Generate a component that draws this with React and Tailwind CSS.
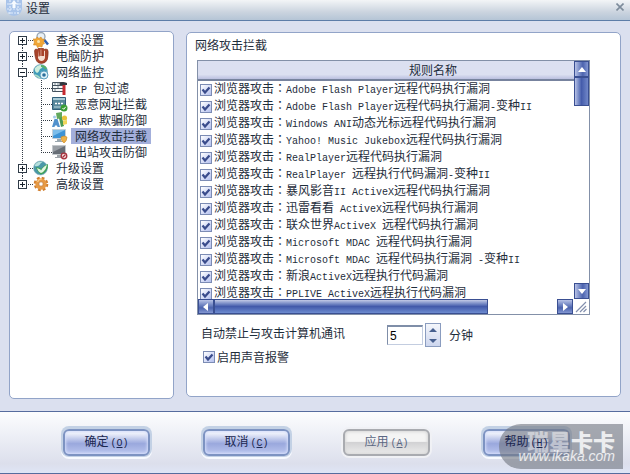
import React, { useState } from "react";

const rules = [
  "浏览器攻击：Adobe Flash Player远程代码执行漏洞",
  "浏览器攻击：Adobe Flash Player远程代码执行漏洞-变种II",
  "浏览器攻击：Windows ANI动态光标远程代码执行漏洞",
  "浏览器攻击：Yahoo! Music Jukebox远程代码执行漏洞",
  "浏览器攻击：RealPlayer远程代码执行漏洞",
  "浏览器攻击：RealPlayer 远程执行代码漏洞-变种II",
  "浏览器攻击：暴风影音II ActiveX远程代码执行漏洞",
  "浏览器攻击：迅雷看看 ActiveX远程代码执行漏洞",
  "浏览器攻击：联众世界ActiveX 远程代码执行漏洞",
  "浏览器攻击：Microsoft MDAC 远程代码执行漏洞",
  "浏览器攻击：Microsoft MDAC 远程代码执行漏洞 -变种II",
  "浏览器攻击：新浪ActiveX远程执行代码漏洞",
  "浏览器攻击：PPLIVE ActiveX远程执行代码漏洞",
];

const tree = [
  { label: "查杀设置", icon: "scan", level: 0 },
  { label: "电脑防护", icon: "glove", level: 0 },
  { label: "网络监控", icon: "globe", level: 0, open: true },
  { label: "IP 包过滤", icon: "filter", level: 1 },
  { label: "恶意网址拦截", icon: "url", level: 1 },
  { label: "ARP 欺骗防御", icon: "arp", level: 1 },
  { label: "网络攻击拦截", icon: "attack", level: 1 },
  { label: "出站攻击防御", icon: "outbound", level: 1, last: true },
  { label: "升级设置", icon: "update", level: 0 },
  { label: "高级设置", icon: "gear", level: 0, last: true },
];

// Latin runs are set at half the width of a Chinese character
const Mixed = ({ text }) =>
  text.split(/([\x20-\x7e]+|：)/).map((part, i) => {
    if (part === "：") {
      return (
        <span key={i} className="font-['Noto_Sans_CJK_TC',sans-serif]">
          {part}
        </span>
      );
    }
    return /^[\x20-\x7e]+$/.test(part) ? (
      <span
        key={i}
        className="font-['Liberation_Mono',monospace] text-[10px] whitespace-pre"
      >
        {part}
      </span>
    ) : (
      part
    );
  });

const icons = {
  scan: (
    <>
      <path d="M11 7.500l4 5" stroke="#2f5fae" strokeWidth="2.500" />
      <circle cx="8" cy="4.500" r="4" fill="#e8f0f6" stroke="#98a5b2" strokeWidth="1.300" />
      <path d="M0 7l3 0 1-2 2 1.500 2-1.500 1 2 2.500.5-1 2 1 2-2 1-.5 2.500-2.500-.5-2 1-1-2.500-3 0 1-3z" fill="#f0a637" stroke="#d4871f" strokeWidth=".6" />
      <circle cx="5.500" cy="9.500" r="1.500" fill="#fbe3a8" />
    </>
  ),
  glove: (
    <>
      <path d="M1.500 3q0-2 2-2l1 1q0-2 2-2l1.500.5Q9-.5 10.500.5L11 1.500q2-1 3.500 0 1 1 .5 6 0 5-3 7-4 2-7 0-3-2-3.500-11.500z" fill="#a8432a" stroke="#7d2d1a" strokeWidth=".6" />
      <path d="M5 2v8q1 3 3.500 3Q11 13 12 10V3L10 2v6H9V1.500H7.500V8h-1z" fill="#f6ded0" />
      <path d="M6 1.500v7M8.200 1v7M10.500 1.500V8" stroke="#a8432a" strokeWidth="1.100" />
    </>
  ),
  globe: (
    <>
      <circle cx="7.500" cy="7.500" r="7" fill="#3f9cba" stroke="#7fa6b6" strokeWidth=".6" />
      <path d="M2 4q4-5 8-2-1 3-3 3-1 3-3 4-3-2-2-5z" fill="#cfeedd" />
      <path d="M2 11q3 1 5 3" stroke="#a9dcc6" strokeWidth="1.500" fill="none" />
      <path d="M8 2q4 0 5 3" stroke="#58b26a" strokeWidth="2" fill="none" />
      <circle cx="11" cy="11" r="4" fill="#dcf0f7" stroke="#5c9fc0" />
      <circle cx="11" cy="11" r="1.800" fill="#2c6f9d" />
    </>
  ),
  filter: (
    <>
      <path d="M.5 2.500h11v9H.5z" fill="#f4f7f8" stroke="#44525e" />
      <path d="M1 5.500h10M1 8.500h10" stroke="#44525e" />
      <path d="M3 3v2M6 3v2M3 9v2M6 6v2" stroke="#7c8a94" />
      <path d="M7.500 3q3-2 7.500 0v2H7.500z" fill="#33383f" />
      <path d="M10.500 5h3v10h-3z" fill="#c62a31" />
    </>
  ),
  url: (
    <>
      <path d="M.5 1.500h13v12H.5z" fill="#58889b" stroke="#315f7a" />
      <path d="M1 2h12v2H1z" fill="#a9cbd7" />
      <path d="M3 7.500h2M6 7.500h2M9 7.500h2" stroke="#fff" strokeWidth="1.500" />
      <path d="M2 11h8" stroke="#bfdae2" />
      <circle cx="12" cy="12" r="3.500" fill="#3a9e35" />
      <path d="M10.500 12l1.200 1.300 2-2.500" stroke="#fff" fill="none" />
    </>
  ),
  arp: (
    <>
      <path d="M4 1l6-1v6l-5 1z" fill="#63a85c" />
      <path d="M7 6l3-1 2 9-3 1z" fill="#4b9a55" />
      <circle cx="12.500" cy="6" r="2.600" fill="#e8c33d" />
      <path d="M11 9l4-1v4l-4 1z" fill="#f0d65c" />
      <path d="M0 15l2.500-8h3L8 15H5.500L5 13.500H3L2.500 15z" fill="#5292cd" />
      <circle cx="2.500" cy="5" r="1.500" fill="#a5cce9" />
    </>
  ),
  attack: (
    <>
      <path d="M.5 1.500h13v9H.5z" fill="#3d93d6" stroke="#c5d0d8" />
      <path d="M1 2h12L1 8z" fill="#7cbdea" />
      <path d="M5 11h4v2h2v1H3v-1h2z" fill="#9ba8b0" />
      <path d="M9 9l3-1 3 1q0 4-3 6-3-2-3-6z" fill="#efb34a" stroke="#c98a28" strokeWidth=".6" />
    </>
  ),
  outbound: (
    <>
      <path d="M.5 1.500h13v9H.5z" fill="#666d75" stroke="#c2c7cb" />
      <path d="M1 2h12L1 8z" fill="#989ea4" />
      <path d="M5 11h4v2h2v1H3v-1h2z" fill="#9da3a8" />
      <circle cx="12" cy="12" r="2.800" fill="#f3dcdc" stroke="#a8323e" strokeWidth="1.300" />
      <path d="M10.500 13.500l3-3" stroke="#a8323e" strokeWidth="1.200" />
    </>
  ),
  update: (
    <>
      <circle cx="7.500" cy="8" r="7" fill="#4b98a8" stroke="#93b9c0" strokeWidth=".6" />
      <path d="M1.500 6q2-5 8-4-2 1-3 3-2 2-5 1z" fill="#b5dfdc" />
      <path d="M3 7l4 1 1 1q3-4 7-5 .5 4-2 7-2 3-5 3.500Q4 12 3 7z" fill="#3fa154" />
      <path d="M4 8l3.500 1.500.5 1Q10.500 6 14 5q-1 4-3 6-1 1.500-3 2Q5 12 4 8z" fill="#e4f6e2" />
    </>
  ),
  gear: (
    <>
      <circle cx="8" cy="8" r="6" fill="none" stroke="#d07d2c" strokeWidth="2.600" strokeDasharray="2.700 2.010" />
      <circle cx="8" cy="8" r="4" fill="none" stroke="#e79a45" strokeWidth="3.400" />
      <path d="M4.500 6q1-3 4.500-3" stroke="#fac987" strokeWidth="1.200" fill="none" />
      <circle cx="8" cy="8" r="2.200" fill="#fff" stroke="#b86a1f" strokeWidth=".7" />
    </>
  ),
};

const TreeLines = ({ node, first }) => {
  const dots = { stroke: "#333c46", strokeDasharray: "1 1" };
  if (node.level === 1) {
    return (
      <svg width="42" height="16" className="shrink-0" shapeRendering="crispEdges">
        <path d="M12.500 0v16" {...dots} />
        <path d={node.last ? "M31.500 0v9" : "M31.500 0v16"} {...dots} />
        <path d="M31 8.500h11" {...dots} />
      </svg>
    );
  }
  return (
    <svg width="23" height="16" className="shrink-0" shapeRendering="crispEdges">
      {!first && <path d="M12.500 0v4" {...dots} />}
      {!node.last && <path d="M12.500 13v3" {...dots} />}
      <path d="M18 8.500h5" {...dots} />
      <path d="M8.500 4.500h8v8h-8z" fill="#fff" stroke="#2f3b47" />
      <path d={node.open ? "M10 8.500h5" : "M10 8.500h5M12.500 6v5"} stroke="#16202a" />
    </svg>
  );
};

const CheckBox = ({ id, defaultChecked }) => (
  <span className="grid shrink-0">
    <input
      id={id}
      type="checkbox"
      defaultChecked={defaultChecked}
      className="peer col-start-1 row-start-1 size-3 appearance-none border border-[#7c8cb4] bg-linear-to-br from-white to-[#b4c0ee]"
    />
    <svg
      viewBox="0 0 12 12"
      className="pointer-events-none invisible col-start-1 row-start-1 size-3 peer-checked:visible"
    >
      <path d="M2.500 5.500L5 8.500l4.500-5" fill="none" stroke="#3a4c8c" strokeWidth="2.200" />
    </svg>
  </span>
);

const Arrow = ({ d }) => (
  <svg viewBox="0 0 10 10" className="size-[10px]" fill="#fff">
    <path d={d} />
  </svg>
);

const DialogButton = ({ text, hotkey, disabled }) => (
  <button
    type="button"
    disabled={disabled}
    className={
      disabled
        ? "h-[27px] w-[87px] rounded-md border-2 border-[#a9abb0] bg-linear-to-b from-[#f4f4f4] from-45% via-[#d2d2d4] via-50% to-[#ececec] text-[#5b6884] shadow-[inset_0_0_3px_1px_#d8d8d8,0_0_0_2px_#f0f1f5]"
        : "h-[27px] w-[87px] rounded-md border-2 border-[#7d93c2] bg-linear-to-b from-[#f0f2fb] from-10% via-[#9aa8dd] via-55% to-[#bac5ee] text-[#1b2750] shadow-[inset_0_0_3px_1px_#d5defa,0_-1px_0_2px_#c3d1e5,0_1px_0_2px_#f8faff]"
    }
  >
    <span className="relative z-20">
      {text}
      <span className="ml-0.5 font-['Liberation_Mono',monospace] text-[10px]">
        (<u>{hotkey}</u>)
      </span>
    </span>
  </button>
);

const App = () => {
  const [selected, setSelected] = useState("网络攻击拦截");
  const [minutes, setMinutes] = useState(5);

  return (
    <div className="relative flex min-h-screen flex-col bg-[#dbe0ef] font-['Noto_Sans_CJK_SC',sans-serif] text-xs/4 text-[#1e2d3b]">
      <header className="flex h-[21px] items-start justify-between border-b border-[#5d7da8] bg-linear-to-b from-[#f3f5f7] via-[#cbd4df] via-60% to-[#b5c5d6] px-1.5">
        <div className="flex items-start gap-1">
          <svg viewBox="0 0 16 16" className="size-4">
            <path d="M0 0h16v9q-1 6-8 7-7-1-8-7z" fill="#a9c4ea" />
            <path d="M1 4h14M1 9h14M2 13h12M4 0v14M12 0v14" stroke="#dfebfb" strokeWidth="1.200" strokeDasharray="2 1" />
            <path d="M5 4l3-4 3 4-1.500 0v4h-3v-4z" fill="#f7fbff" />
          </svg>
          <h1>设置</h1>
        </div>
        <button type="button" aria-label="关闭" className="pt-[3px]">
          <svg viewBox="0 0 8 8" className="size-2">
            <path d="M.5.5l7 7M7.500.5l-7 7" stroke="#7d8b9b" strokeWidth="1.600" />
          </svg>
        </button>
      </header>

      <main className="flex grow gap-3 px-[9px] pt-[10px] pb-3">
        <nav className="w-[165px] shrink-0 rounded-[5px] border border-[#92a4c8] bg-white">
          <ul>
            {tree.map((node, i) => (
              <li key={node.label} className="flex h-4">
                <TreeLines node={node} first={i === 0} />
                <svg viewBox="0 0 16 16" className="size-4 shrink-0">
                  {icons[node.icon]}
                </svg>
                <button
                  type="button"
                  onClick={() => setSelected(node.label)}
                  className={
                    selected === node.label
                      ? "ml-[3px] bg-[#a3afdb] px-1 whitespace-nowrap"
                      : "ml-[3px] px-1 whitespace-nowrap"
                  }
                >
                  <Mixed text={node.label} />
                </button>
              </li>
            ))}
          </ul>
        </nav>

        <section className="mt-px mb-[2px] min-w-0 grow rounded-[5px] border border-[#92a4c8] bg-white pt-1 pb-[30px]">
          <h2 className="pl-2">网络攻击拦截</h2>

          <div className="mt-[7px] mr-[30px] ml-[10px] border border-[#8390a8]">
            <div className="flex h-[238px]">
              <div className="min-w-0 grow overflow-hidden">
                <table className="w-[125%] border-separate border-spacing-0">
                  <thead>
                    <tr>
                      <th className="h-5 border-b-2 border-[#77839e] bg-linear-to-b from-[#dce0f1] from-75% to-[#bbc0e0] p-0 text-center font-normal">
                        规则名称
                      </th>
                    </tr>
                  </thead>
                  <tbody>
                    {rules.map((rule, i) => (
                      <tr key={rule}>
                        <td className="h-[17px] p-0">
                          <label
                            htmlFor={`rule-${i}`}
                            className="flex h-4 items-center gap-0.5 pl-0.5 whitespace-nowrap"
                          >
                            <CheckBox id={`rule-${i}`} defaultChecked />
                            <span>
                              <Mixed text={rule} />
                            </span>
                          </label>
                        </td>
                      </tr>
                    ))}
                  </tbody>
                </table>
              </div>
              <div className="flex w-[15px] shrink-0 flex-col">
                <button type="button" aria-label="向上" className="flex h-4 items-center justify-center border border-[#3a4f92] bg-linear-to-r from-[#b8c2e6] via-[#4c63ae] via-60% to-[#8397d2]">
                  <Arrow d="M1 8l4-5 4 5z" />
                </button>
                <div className="h-[29px] border border-[#3a4f92] bg-linear-to-r from-[#b8c2e6] via-[#455cab] via-50% to-[#7187c8]" />
                <div className="grow" />
                <button type="button" aria-label="向下" className="flex h-4 items-center justify-center border border-[#3a4f92] bg-linear-to-r from-[#b8c2e6] via-[#4c63ae] via-60% to-[#8397d2]">
                  <Arrow d="M1 3l4 5 4-5z" />
                </button>
              </div>
            </div>
            <div className="flex h-[15px]">
              <button type="button" aria-label="向左" className="flex w-4 items-center justify-center border border-[#3a4f92] bg-linear-to-b from-[#b8c2e6] via-[#4c63ae] via-60% to-[#8397d2]">
                <Arrow d="M7 1L2 5l5 4z" />
              </button>
              <div className="grow">
                <div className="h-full w-4/5 border border-[#3a4f92] bg-linear-to-b from-[#c3cae6] via-[#435aaa] via-50% to-[#6d8bd0]" />
              </div>
              <button type="button" aria-label="向右" className="flex w-4 items-center justify-center border border-[#3a4f92] bg-linear-to-b from-[#b8c2e6] via-[#4c63ae] via-60% to-[#8397d2]">
                <Arrow d="M3 1l5 4-5 4z" />
              </button>
              <svg viewBox="0 0 16 15" className="h-[15px] w-4">
                <path d="M3 13L13 3M7 13l6-6M10.500 13l3-3" stroke="#8490ae" strokeWidth="1.200" />
              </svg>
            </div>
          </div>

          <div className="mt-2 flex h-6 items-center pl-[14px]">
            <label htmlFor="minutes" className="w-[186px] pb-1">
              自动禁止与攻击计算机通讯
            </label>
            <input
              id="minutes"
              type="text"
              value={minutes}
              onChange={(e) => setMinutes(Number(e.target.value) || 0)}
              className="h-5 w-9 border border-t-2 border-[#c3cde0] border-t-[#7f8ea8] border-l-[#7f8ea8] pl-0.5 font-['Liberation_Sans',sans-serif] text-xs/4 text-black"
            />
            <div className="ml-0.5 flex h-6 w-4 flex-col border border-[#8a9cbf] bg-linear-to-b from-[#f4f6fb] to-[#cdd6ee]">
              <button
                type="button"
                aria-label="增加"
                onClick={() => setMinutes(minutes + 1)}
                className="flex grow items-center justify-center"
              >
                <svg viewBox="0 0 8 4" className="h-1 w-2" fill="#47608f">
                  <path d="M0 4l4-4 4 4z" />
                </svg>
              </button>
              <button
                type="button"
                aria-label="减少"
                onClick={() => setMinutes(Math.max(0, minutes - 1))}
                className="flex grow items-center justify-center"
              >
                <svg viewBox="0 0 8 4" className="h-1 w-2" fill="#47608f">
                  <path d="M0 0l4 4 4-4z" />
                </svg>
              </button>
            </div>
            <span className="pl-2">分钟</span>
          </div>

          <div className="mt-0.5 flex h-4 items-center gap-0.5 pl-4">
            <CheckBox id="sound" defaultChecked />
            <label htmlFor="sound">启用声音报警</label>
          </div>
        </section>
      </main>

      <footer className="flex h-[63px] items-start justify-center gap-[53px] border-t border-b border-[#566c9e] bg-linear-to-b from-[#fcfdfe] via-[#dcdfec] via-85% to-[#dfe5f6] pt-[17px] pl-[3px]">
        <DialogButton text="确定" hotkey="O" />
        <DialogButton text="取消" hotkey="C" />
        <DialogButton text="应用" hotkey="A" disabled />
        <DialogButton text="帮助" hotkey="H" />
      </footer>

      <div className="pointer-events-none absolute right-[7px] bottom-[5px] z-10 flex h-[45px] w-[124px] flex-col items-end rounded-l-[22px] bg-[#70757f]/60 pt-2 pr-2 text-white/80">
        <span className="text-[22px]/4 font-black">
          <span className="opacity-60">瑞星</span>卡卡
        </span>
        <span className="font-['Liberation_Sans',sans-serif] text-sm/4 italic">
          www.ikaka.com
        </span>
      </div>
    </div>
  );
};

export default App;
